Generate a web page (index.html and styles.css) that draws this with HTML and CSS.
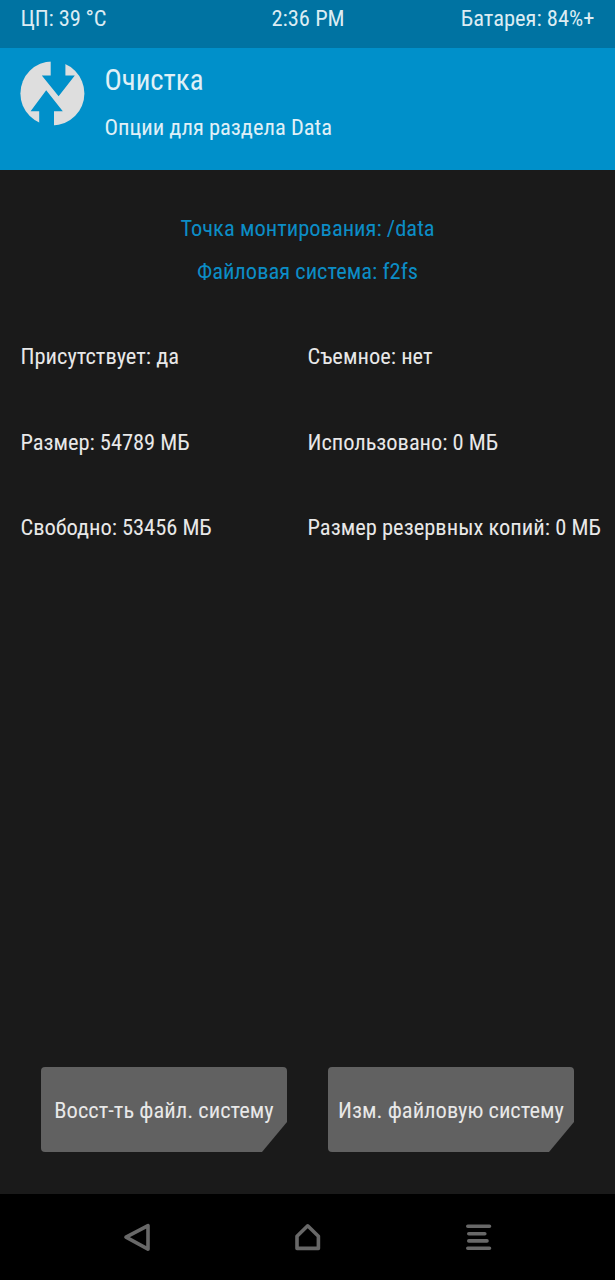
FILE: index.html
```html
<!DOCTYPE html>

<html lang="ru">
	<head>
		<title>Очистка</title>
		<meta charset="utf-8" />
		<link rel="stylesheet" href="styles.css">
	</head>
	<body>
		<div id="statusbar">
			<div class="left">ЦП: 39 °C</div>
			<div class="clock">2:36 PM</div>
			<div class="right">Батарея: 84%+</div>
		</div>
		<div id="header">
			<svg id="logo" width="65" height="65" viewBox="20 61 65 65">
				<circle cx="52.4" cy="93.4" r="32" fill="#dedede" />
				<path d="M50.7 60V75.6H41.8L58.6 96.2L74.8 75.6H65.4V60Z" fill="#0090ca" />
				<path d="M46.2 90.3L30.6 111.2H39.2V127H54V111.2H62.8Z" fill="#0090ca" />
			</svg>
			<div class="titles">
				<h1>Очистка</h1>
				<h2>Опции для раздела Data</h2>
			</div>
		</div>
		<div id="content">
			<div class="partition">Точка монтирования: /data</div>
			<div class="partition">Файловая система: f2fs</div>
			<div id="info">
				<div>Присутствует: да</div>
				<div>Съемное: нет</div>
				<div class="numbers">Размер: 54789 МБ</div>
				<div class="numbers">Использовано: 0 МБ</div>
				<div class="numbers">Свободно: 53456 МБ</div>
				<div>Размер резервных копий: 0 МБ</div>
			</div>
		</div>
		<div id="actions">
			<div class="button">Восст-ть файл. систему</div>
			<div class="button">Изм. файловую систему</div>
		</div>
		<div id="navbar">
			<svg width="30" height="30" viewBox="122 1222 30 30">
				<path d="M148 1225.6V1249.2L126 1237.2Z" />
			</svg>
			<svg width="30" height="30" viewBox="293 1222 30 30">
				<path d="M297 1236.2L307.7 1225.8L318.4 1236.2V1248.4H297Z" />
			</svg>
			<svg width="30" height="30" viewBox="463 1222 30 30">
				<path d="M467.8 1226.3H489.5M468.8 1233.7H484.8M468.8 1240.9H487M467.8 1248.2H489.5" />
			</svg>
		</div>
	</body>
</html>
```

FILE: styles.css
```css
*{ box-sizing: border-box; }
body{
	margin: 0; height: 1280px; overflow: hidden;
	display: flex; flex-direction: column;
	background: #1a1a1a; color: #e8e8e8;
	font-family: "Roboto Condensed", Roboto, sans-serif;
	font-stretch: 75%; font-size: 22.5px;
	white-space: nowrap;
}
#statusbar{
	height: 48px; padding: 0px 20.5px;
	display: flex; justify-content: space-between;
	background: #0073a2; line-height: 36px; color: #dcecf3;
}
#statusbar div{ flex: 1; }
#statusbar .left{ letter-spacing: -0.15px; }
.clock{ text-align: center; padding-left: 1px; }
.right{ text-align: right; }
#header{
	height: 122px; padding: 13px 20px;
	display: flex; gap: 19.5px;
	background: #0090ca; color: #e0f0f7;
}
h1, h2{ margin: 0; font-weight: normal; }
h1{ font-size: 28.8px; line-height: 39px; }
h2{ font-size: 22.5px; line-height: 30px; margin-top: 12px; }
#content{ flex: 1; padding-top: 37px; }
.partition{
	height: 43px; line-height: 43px;
	text-align: center; color: #0c8dc6;
}
#info{
	padding-left: 20.5px; margin-top: 21px;
	display: grid; grid-template-columns: 287px 1fr;
	grid-template-rows: 86px 85px 85px;
	line-height: 85px;
}
.numbers{ letter-spacing: -0.05px; }
#actions{
	height: 127px; padding: 0px 41px;
	display: flex; justify-content: space-between;
}
.button{
	width: 246px; height: 85px; line-height: 86px;
	background: #616161; border-radius: 4px;
	text-align: center;
	clip-path: polygon(0 0, 100% 0, 100% 55px, 221px 100%, 0 100%);
}
#navbar{
	height: 86px; padding: 0px 122px;
	display: flex; justify-content: space-between; align-items: center;
	background: #000000;
}
#navbar svg{
	fill: none; stroke: #686868; stroke-width: 3.6;
	stroke-linecap: round; stroke-linejoin: round;
}
```
